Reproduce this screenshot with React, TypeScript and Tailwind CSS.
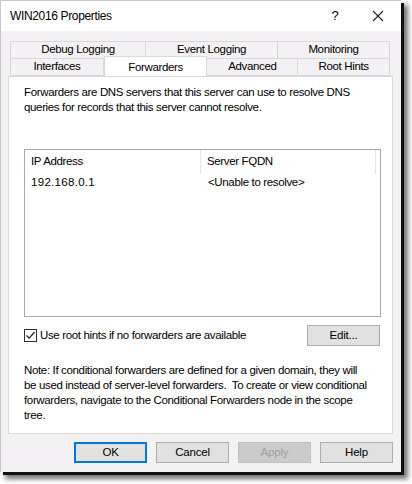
import React from "react";

const font = { fontFamily: '"Liberation Sans", Arial, sans-serif' };

const Tab = ({ label, w, active }: { label: string; w: string; active?: boolean }) => (
  <div
    className={
      active
        ? `${w} h-[20px] -mt-[2px] bg-white border border-[#d9d9d9] border-b-0 flex items-start justify-center pt-[2px] relative z-10 -mb-px`
        : `${w} h-[18px] border border-[#d9d9d9] -ml-px first:ml-0 flex items-center justify-center`
    }
  >
    {label}
  </div>
);

const Button = ({ label, focus, disabled }: { label: string; focus?: boolean; disabled?: boolean }) => (
  <button
    className={
      "w-[73px] h-[21px] border tracking-[-0.2px] " +
      (focus
        ? "border-[#0078d7] bg-[#e1e1e1] text-black border-2"
        : disabled
        ? "border-[#bfbfbf] bg-[#cccccc] text-[#a0a0a0]"
        : "border-[#adadad] bg-[#e1e1e1] text-black")
    }
  >
    {label}
  </button>
);

export default function App() {
  return (
    <div className="w-[412px] h-[484px] bg-white text-[11.5px] tracking-[-0.35px] text-black" style={font}>
      <div className="w-[401px] h-[472px] bg-[#f4f1f4] border-l border-t border-[#c8c8c8] flex flex-col shadow-[3px_3px_0_0_#111,6px_6px_5px_1px_rgba(0,0,0,0.55)]">
        {/* TITLE */}
        <div className="h-[30px] bg-white flex items-center pl-[9px] text-[12px]">
          <span className="flex-1">WIN2016 Properties</span>
          <span className="w-[40px] text-center text-[13px]">?</span>
          <span className="w-[46px] flex justify-center">
            <svg width="12" height="12" viewBox="0 0 12 12">
              <path d="M1 1 L11 11 M11 1 L1 11" stroke="#222" strokeWidth="1.1" />
            </svg>
          </span>
        </div>

        {/* TABS */}
        <div className="pl-[9px] pt-[10px]">
          <div className="flex w-[380px]">
            <Tab label="Debug Logging" w="w-[136px]" />
            <Tab label="Event Logging" w="w-[133px]" />
            <Tab label="Monitoring" w="w-[113px]" />
          </div>
          <div className="flex w-[380px] -mt-px">
            <Tab label="Interfaces" w="w-[94px]" />
            <Tab label="Forwarders" w="w-[104px]" active />
            <Tab label="Advanced" w="w-[92px]" />
            <Tab label="Root Hints" w="w-[93px]" />
          </div>
        </div>

        {/* PANEL */}
        <div className="ml-[7px] w-[385px] h-[358px] bg-white border border-[#d9d9d9] pl-[15px] pr-[12px] pt-[8px]">
          <p className="leading-[15px] w-[345px]">
            Forwarders are DNS servers that this server can use to resolve DNS queries for records that this server
            cannot resolve.
          </p>

          <div className="mt-[34px] w-[357px] h-[168px] border border-[#a9a9a9] bg-white">
            <div className="flex h-[24px] items-center">
              <div className="w-[176px] pl-[6px] border-r border-[#e5e5e5] h-full flex items-center">IP Address</div>
              <div className="w-[175px] pl-[6px] border-r border-[#e5e5e5] h-full flex items-center">Server FQDN</div>
            </div>
            <div className="flex h-[18px] items-center">
              <div className="w-[177px] pl-[6px] tracking-[0.3px]">192.168.0.1</div>
              <div className="pl-[6px]">&lt;Unable to resolve&gt;</div>
            </div>
          </div>

          <div className="flex items-center mt-[8px] w-[356px]">
            <div className="w-[13px] h-[13px] border border-[#333] bg-white flex items-center justify-center">
              <svg width="11" height="11" viewBox="0 0 11 11">
                <path d="M1.5 5.5 L4.2 8.2 L9.5 2" stroke="#222" strokeWidth="1.2" fill="none" />
              </svg>
            </div>
            <span className="ml-[3px] flex-1">Use root hints if no forwarders are available</span>
            <Button label="Edit..." />
          </div>

          <p className="mt-[17px] leading-[15px] w-[345px]">
            Note: If conditional forwarders are defined for a given domain, they will be used instead of server-level
            forwarders.&nbsp; To create or view conditional forwarders, navigate to the Conditional Forwarders node in
            the scope tree.
          </p>
        </div>

        {/* BUTTONS */}
        <div className="flex justify-end gap-[9px] pr-[8px] pt-[8px]">
          <Button label="OK" focus />
          <Button label="Cancel" />
          <Button label="Apply" disabled />
          <Button label="Help" />
        </div>
      </div>
    </div>
  );
}
